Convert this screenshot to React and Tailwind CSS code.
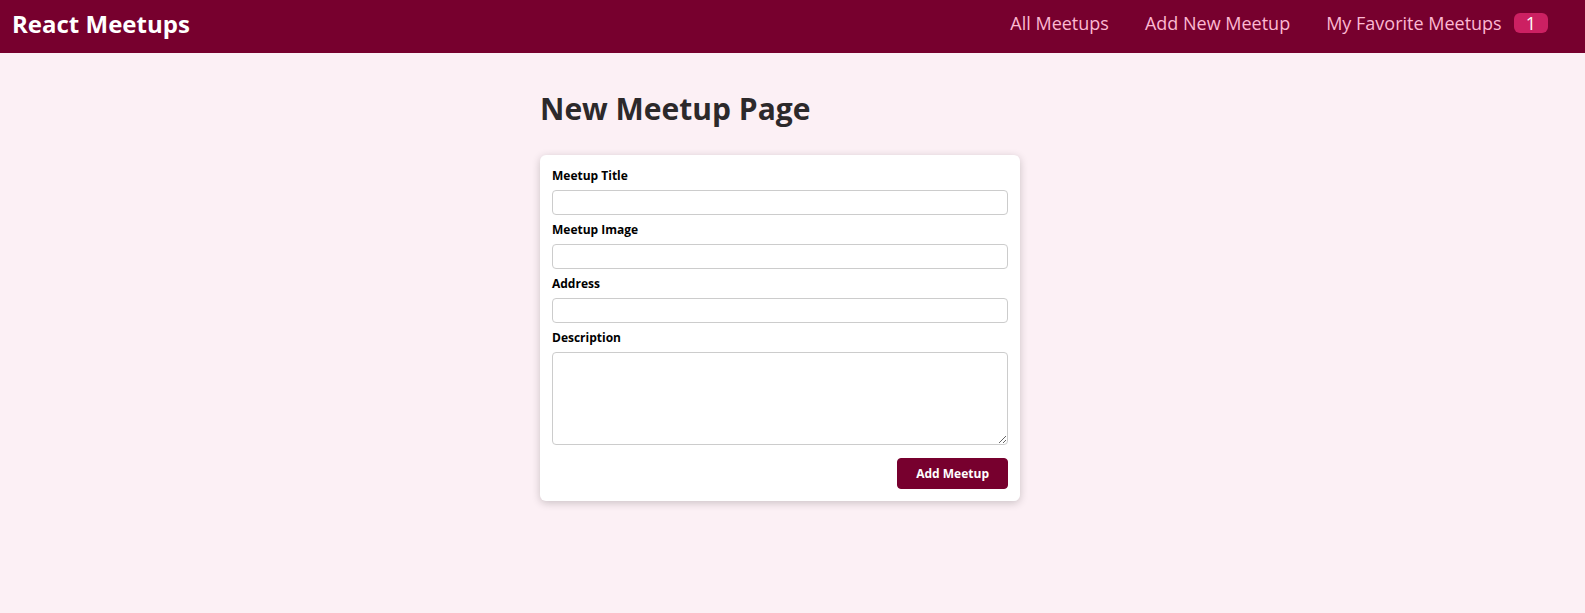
export default function App() {
  const fields = [
    { id: "title", label: "Meetup Title" },
    { id: "image", label: "Meetup Image" },
    { id: "address", label: "Address" },
  ];

  return (
    <div className="min-h-[613px] bg-[#fcf0f5]" style={{ fontFamily: "'Open Sans', 'Liberation Sans', sans-serif" }}>
      <header className="flex h-[53px] items-center justify-between bg-[#77002e] pb-[5px] pl-[12px] pr-[37px]">
        <div className="text-[24px] font-bold text-white">React Meetups</div>
        <nav className="-mt-[2px]">
          <ul className="flex items-center gap-[36px]">
            <li><a className="text-[18px] text-[#fcb8d2]">All Meetups</a></li>
            <li><a className="text-[18px] text-[#fcb8d2]">Add New Meetup</a></li>
            <li>
              <a className="flex items-center gap-[12px] text-[18px] text-[#fcb8d2]">
                My Favorite Meetups
                <span className="flex h-[20px] items-center rounded-[6px] bg-[#cc2062] px-[12px] text-white">1</span>
              </a>
            </li>
          </ul>
        </nav>
      </header>

      <main className="pr-[25px]">
        <div className="mx-auto w-[480px] pt-[35px]">
          <h1 className="mb-[25px] text-[30px] font-bold leading-[42px] text-[#2c292b]">New Meetup Page</h1>

          <div className="rounded-[6px] bg-white px-[12px] pb-[12px] pt-[13px] shadow-[0_2px_8px_rgba(0,0,0,0.2)]">
            <form className="text-[12px] text-black">
              {fields.map(f => (
                <div key={f.id} className="mb-[7px]">
                  <label htmlFor={f.id} className="mb-[6px] block font-bold leading-[16px]">{f.label}</label>
                  <input id={f.id} type="text" className="block h-[25px] w-full rounded-[4px] border border-[#ccc] bg-white px-[3px]" />
                </div>
              ))}
              <div>
                <label htmlFor="description" className="mb-[6px] block font-bold leading-[16px]">Description</label>
                <textarea id="description" rows="5" className="block h-[93px] w-full rounded-[4px] border border-[#ccc] bg-white p-[3px]" />
              </div>
              <div className="mt-[13px] flex justify-end">
                <button type="button" className="h-[31px] rounded-[4px] border border-[#77002e] bg-[#77002e] px-[18px] font-bold text-white">
                  Add Meetup
                </button>
              </div>
            </form>
          </div>
        </div>
      </main>
    </div>
  );
}
